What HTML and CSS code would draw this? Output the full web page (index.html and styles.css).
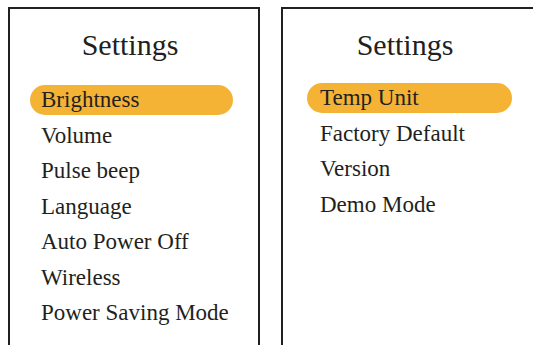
FILE: index.html
```html
<!DOCTYPE html>
<html lang="en">
<head>
    <meta charset="UTF-8">
    <meta name="viewport" content="width=device-width, initial-scale=1.0">
    <title>Settings</title>
    <link rel="stylesheet" href="styles.css">
</head>
<body>
    <!-- first settings page -->
    <div class="panel">
        <h1 class="title">Settings</h1>
        <ul class="menu">
            <li class="item selected">Brightness</li>
            <li class="item">Volume</li>
            <li class="item">Pulse beep</li>
            <li class="item">Language</li>
            <li class="item">Auto Power Off</li>
            <li class="item">Wireless</li>
            <li class="item">Power Saving Mode</li>
        </ul>
    </div>

    <!-- second settings page -->
    <div class="panel panel-alt">
        <h1 class="title">Settings</h1>
        <ul class="menu">
            <li class="item selected">Temp Unit</li>
            <li class="item">Factory Default</li>
            <li class="item">Version</li>
            <li class="item">Demo Mode</li>
        </ul>
    </div>
</body>
</html>
```

FILE: styles.css
```css
body {
    font-family: 'Liberation Serif', 'Times New Roman', serif;
    margin: 0;
    padding: 7px 0 0 8px;
    background-color: #ffffff;
    color: #231f20;
    display: flex;
    gap: 21px;
    height: 345px;
    box-sizing: border-box;
    overflow: hidden;
}

.panel {
    width: 252px;
    height: 100%;
    flex-shrink: 0;
    box-sizing: border-box;
    border: 2px solid #231f20;
    border-bottom: none;
    padding: 0 0 0 20px;
}

.title {
    margin: 18px 0 0 -20px;
    padding-right: 8px;
    font-size: 30px;
    font-weight: normal;
    line-height: 36px;
    text-align: center;
}

.menu {
    list-style: none;
    margin: 22px 0 0 0;
    padding: 0;
    display: flex;
    flex-direction: column;
    gap: 5.5px;
}

.item {
    width: 203px;
    height: 30px;
    line-height: 30px;
    font-size: 23px;
    padding-left: 11px;
    box-sizing: border-box;
    border-radius: 15px;
    white-space: nowrap;
}

.selected {
    background-color: #f5b335;
}

.panel-alt {
    border-right: none;
    padding-left: 24px;
}

.panel-alt .title {
    margin-left: -24px;
    padding-right: 6px;
}

.panel-alt .menu {
    margin-top: 20px;
}

.panel-alt .item {
    width: 205px;
    padding-left: 13px;
}
```
